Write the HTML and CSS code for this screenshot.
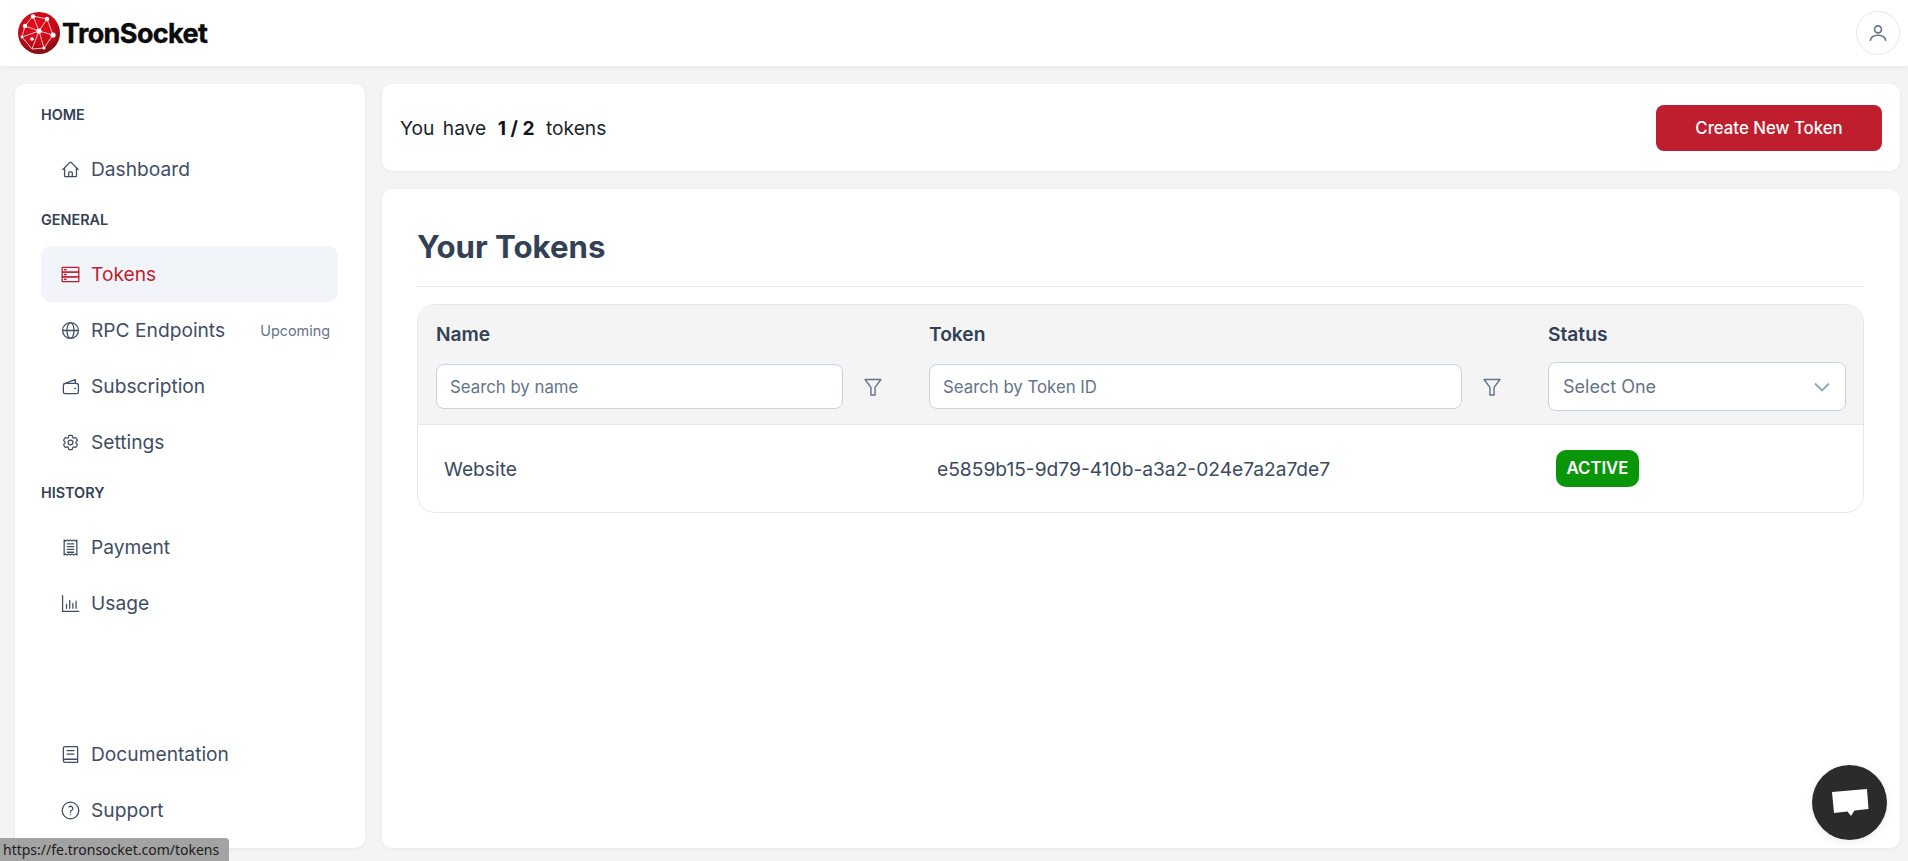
FILE: index.html
```html
<!DOCTYPE html>
<html lang="en">
<head>
<meta charset="utf-8">
<title>TronSocket</title>
<link rel="stylesheet" href="styles.css">
</head>
<body>
<svg class="defs" width="0" height="0">
  <defs>
    <radialGradient id="ball" cx="45%" cy="35%" r="70%">
      <stop offset="0" stop-color="#ea0a1a"/>
      <stop offset="0.6" stop-color="#c80a17"/>
      <stop offset="1" stop-color="#6e0d12"/>
    </radialGradient>
  </defs>
</svg>
<header class="topbar">
  <div class="brand">
    <svg class="brand-mark" viewBox="0 0 42 42">
      <circle cx="21" cy="21" r="21" fill="url(#ball)"/>
      <g stroke="#fff" stroke-width="0.9" fill="none" opacity="0.85">
        <path d="M15 4 L29 7 L21 19 Z M15 4 L7 14 L21 19 M7 14 L4 25 L21 19 M29 7 L35 23 L21 19 M4 25 L14 37 L21 19 M35 23 L26 36 L21 19 M14 37 L26 36"/>
      </g>
      <g fill="#fff">
        <circle cx="15" cy="4.5" r="2.2"/><circle cx="29" cy="7" r="2.2"/><circle cx="21" cy="19" r="2.6"/>
        <circle cx="7" cy="14" r="2.2"/><circle cx="35" cy="23" r="2.6"/><circle cx="14" cy="27" r="1.8"/>
        <circle cx="26" cy="36" r="1.6"/><circle cx="4" cy="25" r="1.4"/>
      </g>
    </svg>
    <span class="brand-name">TronSocket</span>
  </div>
  <button class="avatar" type="button" aria-label="Profile">
    <svg viewBox="0 0 24 24"><circle cx="12" cy="8" r="3.8"/><path d="M3.5 20.5c.6-4 4-6 8.500-6s7.900 2 8.500 6"/></svg>
  </button>
</header>

<div class="shell">
  <aside class="sidebar">
    <div class="nav-label">HOME</div>
    <a class="nav-item">
      <svg class="nav-icon" viewBox="0 0 24 24"><path d="M2.250 12l8.954-8.955c.44-.439 1.152-.439 1.591 0L21.750 12M4.500 9.750v10.125c0 .621.504 1.125 1.125 1.125H9.750v-4.875c0-.621.504-1.125 1.125-1.125h2.250c.621 0 1.125.504 1.125 1.125V21h4.125c.621 0 1.125-.504 1.125-1.125V9.750M8.250 21h8.250"/></svg>
      Dashboard
    </a>
    <div class="nav-label">GENERAL</div>
    <a class="nav-item nav-item-active">
      <svg class="nav-icon" viewBox="0 0 24 24"><rect x="1.500" y="3" width="21" height="6" rx="0.500"/><rect x="1.500" y="9" width="21" height="6"/><rect x="1.500" y="15" width="21" height="6" rx="0.500"/><path d="M4.500 6h2M4.500 12h2M4.500 18h2"/></svg>
      Tokens
    </a>
    <a class="nav-item">
      <svg class="nav-icon" viewBox="0 0 24 24"><circle cx="12" cy="12" r="10"/><ellipse cx="12" cy="12" rx="4.500" ry="10"/><path d="M2 12h20"/></svg>
      RPC Endpoints
      <span class="nav-note">Upcoming</span>
    </a>
    <a class="nav-item">
      <svg class="nav-icon" viewBox="0 0 24 24"><path d="M3.500 8.500 18 3.200V8M3 11a3 3 0 0 1 3-3h13a3 3 0 0 1 3 3v8a2 2 0 0 1-2 2H5a2 2 0 0 1-2-2z"/><path d="M17.500 14.500h.8"/></svg>
      Subscription
    </a>
    <a class="nav-item">
      <svg class="nav-icon" viewBox="0 0 24 24"><path d="M9.594 3.940c.09-.542.56-.94 1.110-.94h2.593c.55 0 1.020.398 1.110.94l.213 1.281c.063.374.313.686.645.870.074.04.147.083.22.127.324.196.72.257 1.075.124l1.217-.456a1.125 1.125 0 011.370.49l1.296 2.247a1.125 1.125 0 01-.26 1.431l-1.003.827c-.293.24-.438.613-.431.992a6.759 6.759 0 010 .255c-.007.378.138.75.43.99l1.005.828c.424.35.534.954.26 1.430l-1.298 2.247a1.125 1.125 0 01-1.369.491l-1.217-.456c-.355-.133-.75-.072-1.076.124a6.570 6.570 0 01-.22.128c-.331.183-.581.495-.644.869l-.213 1.280c-.09.543-.56.941-1.110.941h-2.594c-.55 0-1.020-.398-1.110-.94l-.213-1.281c-.062-.374-.312-.686-.644-.870a6.520 6.520 0 01-.22-.127c-.325-.196-.72-.257-1.076-.124l-1.217.456a1.125 1.125 0 01-1.369-.49l-1.297-2.247a1.125 1.125 0 01.26-1.431l1.004-.827c.292-.24.437-.613.43-.992a6.932 6.932 0 010-.255c.007-.378-.138-.75-.43-.99l-1.004-.828a1.125 1.125 0 01-.26-1.430l1.297-2.247a1.125 1.125 0 011.370-.491l1.216.456c.356.133.751.072 1.076-.124.072-.044.146-.087.22-.128.332-.183.582-.495.644-.869l.214-1.281z"/><circle cx="12" cy="12" r="3"/></svg>
      Settings
    </a>
    <div class="nav-label">HISTORY</div>
    <a class="nav-item">
      <svg class="nav-icon" viewBox="0 0 24 24"><path d="M4 2.500l2 1.200 2-1.200 2 1.200 2-1.200 2 1.200 2-1.200 2 1.200 2-1.200v19l-2-1.200-2 1.200-2-1.200-2 1.200-2-1.200-2 1.200-2-1.200-2 1.200z"/><path d="M8 7.500h8M8 11h8M8 14.500h8M8 18h8"/></svg>
      Payment
    </a>
    <a class="nav-item">
      <svg class="nav-icon" viewBox="0 0 24 24"><path d="M2 2v20h20.500M7 18v-5M11 18V8M15 18v-6M19 18V9"/></svg>
      Usage
    </a>
    <a class="nav-item nav-item-push">
      <svg class="nav-icon" viewBox="0 0 24 24"><path d="M3 19V4a2 2 0 0 1 2-2h15a1 1 0 0 1 1 1v15H5a2 2 0 0 0-2 2 2 2 0 0 0 2 2h16v-4"/><path d="M7.500 7h9M7.500 11.500h9"/></svg>
      Documentation
    </a>
    <a class="nav-item">
      <svg class="nav-icon" viewBox="0 0 24 24"><path d="M9.879 7.519c1.171-1.025 3.071-1.025 4.242 0 1.172 1.025 1.172 2.687 0 3.712-.203.179-.43.326-.67.442-.745.361-1.450.999-1.450 1.827v.75"/><path d="M12 17.250h.01"/><circle cx="12" cy="12" r="10.500"/></svg>
      Support
    </a>
  </aside>

  <main class="content">
    <section class="card summary">
      <p class="summary-text">You have <strong>1 / 2</strong> tokens</p>
      <button class="primary-btn" type="button">Create New Token</button>
    </section>

    <section class="card tokens">
      <div class="tokens-head"><h1 class="tokens-title">Your Tokens</h1></div>
      <div class="table">
        <div class="table-row table-header">
          <div class="th">
            <div class="th-label">Name</div>
            <div class="th-controls">
              <input class="field" type="text" placeholder="Search by name">
              <svg class="filter" viewBox="0 0 24 24"><path d="M2.500 3h19l-7 9.500V21.500h-5V12.500z"/></svg>
            </div>
          </div>
          <div class="th">
            <div class="th-label">Token</div>
            <div class="th-controls">
              <input class="field" type="text" placeholder="Search by Token ID">
              <svg class="filter" viewBox="0 0 24 24"><path d="M2.500 3h19l-7 9.500V21.500h-5V12.500z"/></svg>
            </div>
          </div>
          <div class="th th-status">
            <div class="th-label">Status</div>
            <div class="select">
              <span>Select One</span>
              <svg class="chevron" viewBox="0 0 16 10"><path d="M1 1.500l7 7 7-7"/></svg>
            </div>
          </div>
        </div>
        <div class="table-row table-body">
          <div class="td">Website</div>
          <div class="td">e5859b15-9d79-410b-a3a2-024e7a2a7de7</div>
          <div class="td"><span class="badge">ACTIVE</span></div>
        </div>
      </div>
    </section>
  </main>
</div>

<button class="chat" type="button" aria-label="Chat">
  <svg viewBox="0 0 38 32"><path d="M1 4 36 1 37.500 21 23.500 22.500 20 28 16.500 23.500 3 25z"/></svg>
</button>
<div class="statusbar">https://fe.tronsocket.com/tokens</div>
</body>
</html>
```
FILE: styles.css
```css
* { box-sizing: border-box; }
html, body { margin: 0; height: 100%; }
body {
  height: 861px;
  overflow: hidden;
  display: flex;
  flex-direction: column;
  background: #f4f4f5;
  font-family: Inter, "Liberation Sans", sans-serif;
  color: #3b4a60;
}
.defs { position: absolute; }

.topbar {
  height: 66px;
  flex: none;
  display: flex;
  align-items: center;
  justify-content: space-between;
  padding: 0 8px 0 18px;
  background: #fff;
  box-shadow: 0 1px 4px rgba(0, 0, 0, .06);
  position: relative;
}
.brand { display: flex; align-items: center; gap: 2px; }
.brand-mark { width: 42px; height: 42px; flex: none; }
.brand-name {
  font-size: 27px;
  font-weight: 700;
  letter-spacing: -.6px;
  color: #0b0b0b;
  -webkit-text-stroke: .4px #0b0b0b;
}
.avatar {
  width: 44px;
  height: 44px;
  padding: 0;
  display: flex;
  align-items: center;
  justify-content: center;
  background: #fff;
  border: 1px solid #e2e8f0;
  border-radius: 50%;
}
.avatar svg { width: 22px; height: 22px; fill: none; stroke: #64748b; stroke-width: 1.8; }

.shell {
  flex: 1;
  min-height: 0;
  display: flex;
  gap: 17px;
  padding: 18px 8px 13px 15px;
}

.sidebar {
  width: 350px;
  flex: none;
  display: flex;
  flex-direction: column;
  padding: 8px 27px 10px 26px;
  background: #fff;
  border-radius: 10px;
  box-shadow: 0 1px 4px rgba(0, 0, 0, .05);
}
.nav-label {
  height: 49px;
  flex: none;
  padding-top: 12px;
  font-size: 14.400px;
  line-height: 22px;
  font-weight: 600;
  color: #334155;
}
.nav-item {
  height: 56px;
  flex: none;
  display: flex;
  align-items: center;
  gap: 11px;
  padding: 0 8px 0 20px;
  border-radius: 10px;
  font-size: 19.200px;
  color: #3f4e65;
}
.nav-item-active { background: #f1f5f9; color: #be1e2d; }
.nav-item-push { margin-top: auto; }
.nav-icon {
  width: 19px;
  height: 19px;
  flex: none;
  fill: none;
  stroke: currentColor;
  stroke-width: 1.600;
  stroke-linecap: round;
  stroke-linejoin: round;
}
.nav-note { margin-left: auto; font-size: 14.400px; color: #64748b; }

.content {
  flex: 1;
  min-width: 0;
  display: flex;
  flex-direction: column;
  gap: 18px;
}
.card {
  background: #fff;
  border-radius: 10px;
  box-shadow: 0 1px 4px rgba(0, 0, 0, .05);
}
.summary {
  height: 87px;
  flex: none;
  display: flex;
  align-items: center;
  justify-content: space-between;
  padding: 0 18px;
}
.summary-text { margin: 0; font-size: 19.200px; color: #1a1f29; word-spacing: 3px; }
.summary-text strong { font-weight: 700; word-spacing: 0; color: #0f131a; margin: 0 3px; }
.primary-btn {
  width: 226px;
  height: 46px;
  border: 0;
  border-radius: 8px;
  background: #be1e2d;
  color: #fff;
  font: 500 16.800px Inter, "Liberation Sans", sans-serif;
}

.tokens { flex: 1; padding: 36px 36px 0 35px; }
.tokens-head { padding-bottom: 17px; border-bottom: 1px solid #e2e8f0; margin-bottom: 17px; }
.tokens-title { margin: 0; font-size: 31.200px; line-height: 44px; font-weight: 700; color: #334155; }

.table { border: 1px solid #e5e7eb; border-radius: 18px; overflow: hidden; }
.table-row { display: grid; grid-template-columns: 493px 619px 1fr; }
.table-header { height: 120px; background: #f4f4f5; border-bottom: 1px solid #e5e7eb; }
.th { padding: 17px 28px 0 18px; }
.th-status { padding-right: 17px; }
.th-label { height: 25px; font-size: 19.200px; line-height: 25px; font-weight: 600; color: #334155; }
.th-controls { display: flex; align-items: center; gap: 20px; margin-top: 17px; }
.field {
  flex: 1;
  min-width: 0;
  height: 45px;
  padding: 0 13px;
  background: #fff;
  border: 1px solid #c5d2e4;
  border-radius: 8px;
  font: 16.800px Inter, "Liberation Sans", sans-serif;
  color: #334155;
}
.field::placeholder { color: #64748b; opacity: 1; }
.filter { width: 20px; height: 20px; flex: none; fill: none; stroke: #64748b; stroke-width: 1.700; stroke-linejoin: round; }
.select {
  margin-top: 15px;
  height: 49px;
  display: flex;
  align-items: center;
  justify-content: space-between;
  padding: 0 15px 0 14px;
  background: #fff;
  border: 1px solid #c5d2e4;
  border-radius: 8px;
  font-size: 18px;
  color: #64748b;
}
.chevron { width: 16px; height: 10px; fill: none; stroke: #94a3b8; stroke-width: 1.800; }
.table-body { height: 87px; align-items: center; }
.td { padding-left: 26px; font-size: 19.200px; color: #3b4a60; }
.badge {
  display: inline-block;
  width: 83px;
  height: 37px;
  line-height: 37px;
  text-align: center;
  background: #0a9609;
  border-radius: 10px;
  color: #fff;
  font-size: 16.800px;
  font-weight: 600;
  vertical-align: middle;
}

.chat {
  position: fixed;
  left: 1812px;
  top: 765px;
  width: 75px;
  height: 75px;
  padding: 0;
  display: flex;
  align-items: center;
  justify-content: center;
  background: #2b2b2b;
  border: 0;
  border-radius: 50%;
  box-shadow: 0 2px 8px rgba(0, 0, 0, .08);
}
.chat svg { width: 38px; height: 32px; fill: #fff; margin-top: 2px; }

.statusbar {
  position: fixed;
  left: 0;
  bottom: 0;
  width: 229px;
  height: 23px;
  padding-left: 3px;
  background: #a3a3a3;
  border-top-right-radius: 4px;
  font: 14px/24px "Noto Sans", "Open Sans", sans-serif;
  color: #1c1c1c;
  white-space: nowrap;
}
```
